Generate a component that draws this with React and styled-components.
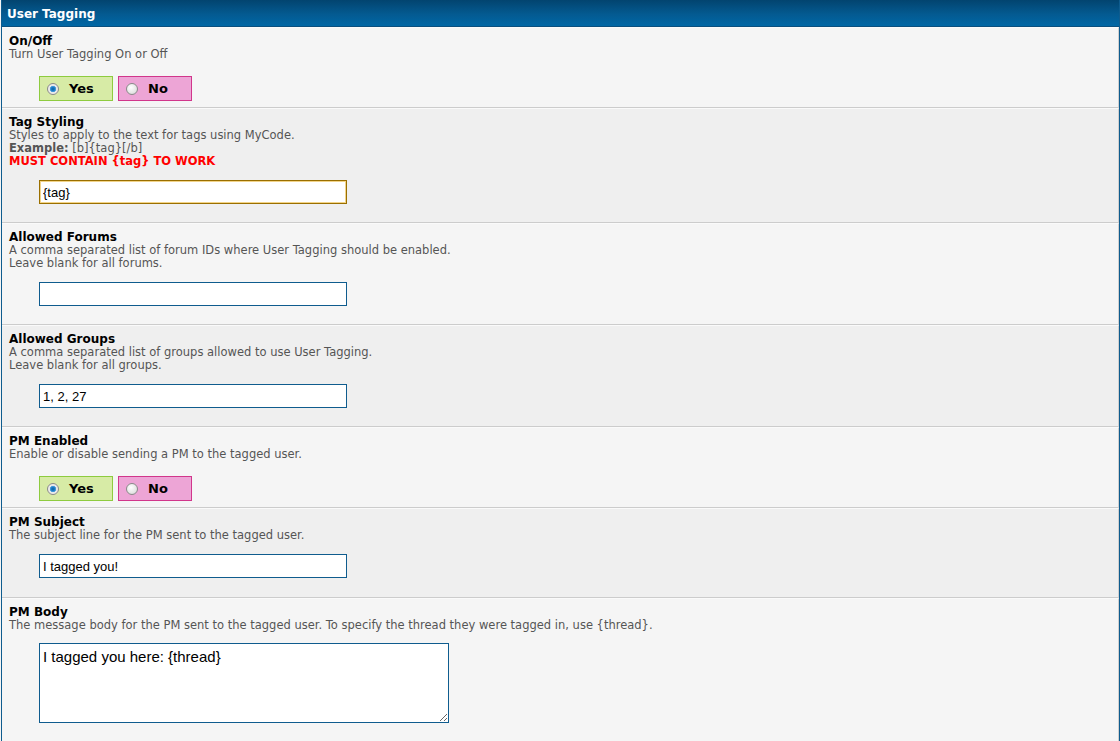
import React from "react";
import styled, { createGlobalStyle } from "styled-components";

const Global = createGlobalStyle`
  html, body { margin: 0; padding: 0; background: #f5f5f5; }
  body { font-family: "DejaVu Sans", Verdana, sans-serif; color: #000; }
`;

const Wrapper = styled.div`
  margin-left: 1px;
  width: 1117px;
  border-left: 1px solid #0f5c8e;
  border-right: 1px solid #0f5c8e;
  min-height: 741px;
  background: #f5f5f5;
`;

const Header = styled.div`
  height: 26px;
  border-bottom: 1px solid #0a4f7e;
  background: linear-gradient(to bottom, #02446f 0%, #045a91 55%, #0067a5 100%);
  color: #fff;
  font-weight: bold;
  font-size: 12px;
  line-height: 29px;
  padding-left: 5px;
`;

const Row = styled.div`
  background: ${(p) => (p.$alt ? "#efefef" : "#f5f5f5")};
  border-top: 1px solid #fafafa;
  border-bottom: 1px solid #cccccc;
  border-right: 1px solid #cfcfcf;
  padding: 6px 7px ${(p) => p.$pb}px 7px;
  &:last-child { border-bottom: none; }
`;

const Title = styled.div`
  font-weight: bold;
  font-size: 12px;
  line-height: 14px;
`;

const Desc = styled.div`
  font-size: 11.5px;
  line-height: 13px;
  color: #555;
`;

const Strong = styled.b`
  color: #555;
`;

const Warn = styled.div`
  font-size: 11.5px;
  line-height: 13px;
  color: #ff0000;
  font-weight: bold;
`;

const Field = styled.div`
  padding-left: 30px;
  margin-top: ${(p) => p.$mt}px;
  display: flex;
  gap: 5px;
`;

const Choice = styled.label`
  box-sizing: border-box;
  width: 74px;
  height: 25px;
  display: flex;
  align-items: center;
  gap: 10px;
  padding-left: 7px;
  border: 1px solid ${(p) => (p.$yes ? "#8ecb3f" : "#d1368b")};
  background: ${(p) => (p.$yes ? "#d7eba6" : "#eda5d6")};
  font-weight: bold;
  font-size: 13px;
  color: #000;
`;

const Radio = styled.span`
  box-sizing: border-box;
  width: 12px;
  height: 12px;
  border-radius: 50%;
  border: 1px solid #8a8a8a;
  background: ${(p) =>
    p.$on
      ? "radial-gradient(circle, #0a5fa0 0, #1f7fc8 2px, #5aa8e0 3px, #e8e8e8 3.5px, #f8f8f8 100%)"
      : "radial-gradient(circle at 40% 35%, #ffffff 0, #e6e6e6 60%, #cfcfcf 100%)"};
  flex: none;
`;

const TextInput = styled.input`
  box-sizing: border-box;
  width: 308px;
  height: 24px;
  margin: 0;
  padding: 2px 3px;
  border: 1px solid ${(p) => (p.$focus ? "#9a6f00" : "#0f5c8e")};
  box-shadow: ${(p) => (p.$focus ? "inset 0 0 0 1px #f2d48a" : "none")};
  background: #fff;
  font-family: "Liberation Sans", Arial, sans-serif;
  font-size: 13px;
  color: #000;
  outline: none;
`;

const TextArea = styled.textarea`
  box-sizing: border-box;
  width: 410px;
  height: 80px;
  margin: 0;
  padding: 4px 3px;
  border: 1px solid #0f5c8e;
  background: #fff;
  font-family: "Liberation Sans", Arial, sans-serif;
  font-size: 15px;
  line-height: 17px;
  color: #000;
  outline: none;
  display: block;
`;

const YesNo = () => (
  <Field $mt={15}>
    <Choice $yes>
      <Radio $on />
      Yes
    </Choice>
    <Choice>
      <Radio />
      No
    </Choice>
  </Field>
);

export default function App() {
  return (
    <>
      <Global />
      <Wrapper>
        <Header>User Tagging</Header>
        <Row $pb={6}>
          <Title>On/Off</Title>
          <Desc>Turn User Tagging On or Off</Desc>
          <YesNo />
        </Row>
        <Row $alt $pb={18}>
          <Title>Tag Styling</Title>
          <Desc>Styles to apply to the text for tags using MyCode.</Desc>
          <Desc>
            <Strong>Example:</Strong> [b]{"{tag}"}[/b]
          </Desc>
          <Warn>MUST CONTAIN {"{tag}"} TO WORK</Warn>
          <Field $mt={12}>
            <TextInput $focus defaultValue="{tag}" />
          </Field>
        </Row>
        <Row $pb={18}>
          <Title>Allowed Forums</Title>
          <Desc>A comma separated list of forum IDs where User Tagging should be enabled.</Desc>
          <Desc>Leave blank for all forums.</Desc>
          <Field $mt={12}>
            <TextInput defaultValue="" />
          </Field>
        </Row>
        <Row $alt $pb={18}>
          <Title>Allowed Groups</Title>
          <Desc>A comma separated list of groups allowed to use User Tagging.</Desc>
          <Desc>Leave blank for all groups.</Desc>
          <Field $mt={12}>
            <TextInput defaultValue="1, 2, 27" />
          </Field>
        </Row>
        <Row $pb={6}>
          <Title>PM Enabled</Title>
          <Desc>Enable or disable sending a PM to the tagged user.</Desc>
          <YesNo />
        </Row>
        <Row $alt $pb={19}>
          <Title>PM Subject</Title>
          <Desc>The subject line for the PM sent to the tagged user.</Desc>
          <Field $mt={12}>
            <TextInput defaultValue="I tagged you!" />
          </Field>
        </Row>
        <Row $pb={18}>
          <Title>PM Body</Title>
          <Desc>
            The message body for the PM sent to the tagged user. To specify the thread they were tagged in, use {"{thread}"}.
          </Desc>
          <Field $mt={11}>
            <TextArea defaultValue="I tagged you here: {thread}" />
          </Field>
        </Row>
      </Wrapper>
    </>
  );
}
